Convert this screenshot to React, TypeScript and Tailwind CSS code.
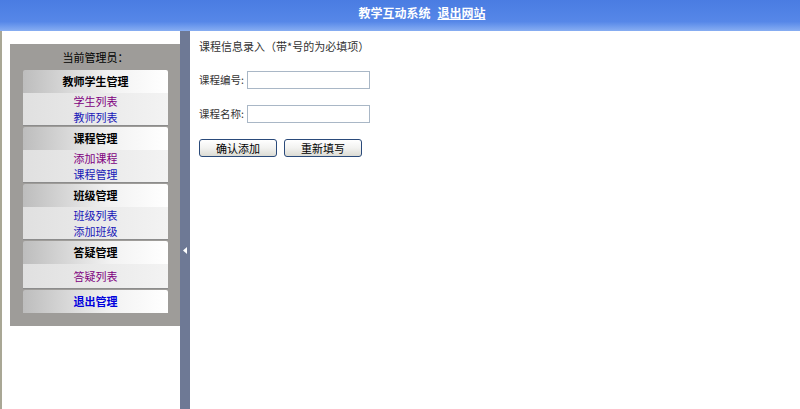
const font = { fontFamily: '"Noto Sans CJK SC", "Liberation Sans", sans-serif' };

type Item = { label: string; visited?: boolean };

const sections: { title: string; items: Item[] }[] = [
  { title: "教师学生管理", items: [{ label: "学生列表", visited: true }, { label: "教师列表" }] },
  { title: "课程管理", items: [{ label: "添加课程", visited: true }, { label: "课程管理" }] },
  { title: "班级管理", items: [{ label: "班级列表" }, { label: "添加班级" }] },
  { title: "答疑管理", items: [{ label: "答疑列表", visited: true }] },
];

function MenuHead({ children, blue }: { children: React.ReactNode; blue?: boolean }) {
  return (
    <div
      className={`h-[23px] flex items-center justify-center text-[11px] font-bold rounded-t-[2px] bg-gradient-to-r from-[#bdbdbd] via-[#f2f2f2] via-60% to-white ${
        blue ? "text-[#0000dd]" : "text-black"
      }`}
    >
      {children}
    </div>
  );
}

function Section({ title, items }: { title: string; items: Item[] }) {
  return (
    <div className="mb-[1px]">
      <MenuHead>{title}</MenuHead>
      <div
        className={`bg-gradient-to-r from-[#e0e0e0] to-[#f3f3f3] border-b border-[#8c8c8c] ${
          items.length === 1 ? "py-[4px]" : "py-0"
        }`}
      >
        {items.map((it) => (
          <div
            key={it.label}
            className={`h-[16px] leading-[16px] text-center text-[11px] ${
              it.visited ? "text-[#800080]" : "text-[#1818b8]"
            }`}
          >
            {it.label}
          </div>
        ))}
      </div>
    </div>
  );
}

function Field({ label }: { label: string }) {
  return (
    <div className="flex items-center h-[18px]">
      <span className="w-[48px] whitespace-nowrap text-[10.5px] text-[#333]">{label}</span>
      <input
        type="text"
        className="w-[123px] h-[18px] border border-[#a9b7c6] bg-white outline-none"
      />
    </div>
  );
}

function Btn({ children }: { children: React.ReactNode }) {
  return (
    <button
      type="button"
      className="w-[78px] h-[18px] leading-[14px] text-[11px] text-black rounded-[3px] border border-[#2a4a7a] bg-gradient-to-b from-white via-[#f2f2f0] to-[#dcdcd4]"
    >
      {children}
    </button>
  );
}

export default function App() {
  return (
    <div className="w-[800px] h-[409px] bg-white flex flex-col overflow-hidden" style={font}>
      <header className="h-[31px] shrink-0 flex justify-center pl-[44px] pt-[4px] bg-gradient-to-b from-[#4a7ce2] via-[#5687e8] via-70% to-[#88aef2] text-white text-[12px] font-bold">
        <span>教学互动系统</span>
        <a href="#" className="ml-[7px] underline">退出网站</a>
      </header>

      <div className="flex flex-1 min-h-0">
        <aside className="w-[180px] shrink-0 border-l-2 border-[#a9a795] pl-[8px] pt-[13px]">
          <div className="w-[171px] bg-[#9e9c99] px-[13px] pb-[13px]">
            <div className="h-[26px] flex items-center justify-center text-[11px] text-black">
              当前管理员：
            </div>
            {sections.map((s) => (
              <Section key={s.title} title={s.title} items={s.items} />
            ))}
            <MenuHead blue>退出管理</MenuHead>
          </div>
        </aside>

        <div className="w-[10px] shrink-0 bg-[#6e7995] flex justify-center pt-[216px]">
          <svg width="4" height="7" viewBox="0 0 4 7">
            <path d="M4 0 L0 3.5 L4 7 Z" fill="#ffffff" />
          </svg>
        </div>

        <main className="flex-1 pl-[9px] pt-[7px] flex flex-col">
          <div className="h-[16px] leading-[16px] text-[11px] text-[#333]">
            课程信息录入（带*号的为必填项）
          </div>
          <div className="mt-[17px] flex flex-col gap-[16px]">
            <Field label="课程编号:" />
            <Field label="课程名称:" />
          </div>
          <div className="mt-[16px] flex gap-[7px]">
            <Btn>确认添加</Btn>
            <Btn>重新填写</Btn>
          </div>
        </main>
      </div>
    </div>
  );
}
